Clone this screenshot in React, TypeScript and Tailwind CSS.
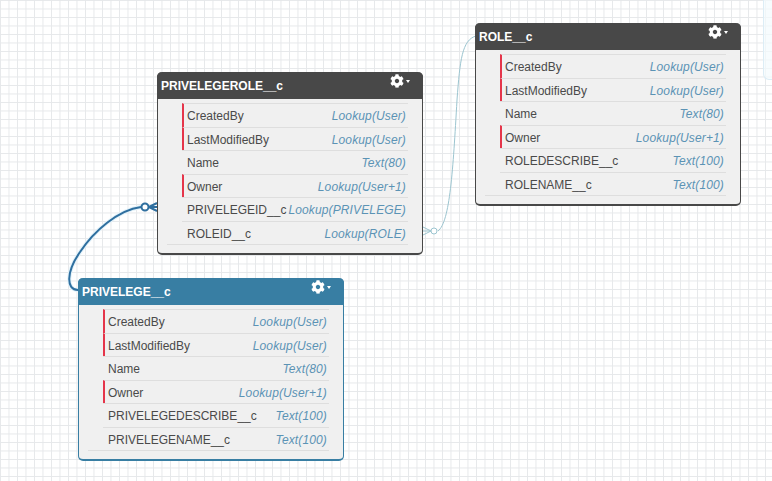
import { FaCog } from 'react-icons/fa'

interface Field {
  name: string
  type: string
  red?: boolean
}

interface EntityProps {
  title: string
  fields: Field[]
  headerClass: string
  borderClass: string
  posClass: string
}

const audit: Field[] = [
  { name: 'CreatedBy', type: 'Lookup(User)', red: true },
  { name: 'LastModifiedBy', type: 'Lookup(User)', red: true },
  { name: 'Name', type: 'Text(80)' },
  { name: 'Owner', type: 'Lookup(User+1)', red: true },
]

function Entity({ title, fields, headerClass, borderClass, posClass }: EntityProps) {
  return (
    <div className={`absolute w-[266px] rounded-[5px] border-x border-b-2 bg-[#f0f0f0] ${borderClass} ${posClass}`}>
      <div className={`relative -mx-px flex h-[27px] items-center rounded-t-[5px] pl-[4px] text-[12px] leading-none font-bold text-white ${headerClass}`}>
        {title}
        <div className="absolute top-[2px] right-[13px] flex items-center gap-[2px]">
          <FaCog size={14} />
          <span className="h-0 w-0 border-x-[2.5px] border-t-[3px] border-x-transparent border-t-white" />
        </div>
      </div>
      <div className="pt-[4px] pr-[14px] pb-[8px] pl-[24px]">
        {fields.map(f => (
          <div
            key={f.name}
            className={`flex h-[23.5px] items-center justify-between border-t border-[#dedede] pt-[2px] pr-[2px] text-[12px] ${f.red ? 'border-l-2 border-l-[#e5354a] pl-[3px]' : 'pl-[5px]'}`}
          >
            <span className="text-[#4a4a4a]">{f.name}</span>
            <span className="tracking-[0.13px] text-[#5b93b5] italic">{f.type}</span>
          </div>
        ))}
        <div className="ml-[-15px] border-t border-[#dedede]" />
      </div>
    </div>
  )
}

export default function App() {
  return (
    <div className="relative h-[481px] w-[772px] overflow-hidden bg-white bg-[linear-gradient(#e6e8ea_1px,transparent_1px),linear-gradient(90deg,#e6e8ea_1px,transparent_1px)] bg-[size:8.5px_8.5px] font-['Liberation_Sans',Arial,sans-serif]">
      {/* side panel edge, top right */}
      <div className="absolute top-0 right-0 h-[80px] w-[9px] rounded-bl-[6px] border-b border-l border-[#dcedf6] bg-[#f4fbfe]/70" />

      {/* relationship lines */}
      <svg className="absolute inset-0" width="772" height="481" fill="none">
        <path d="M78 290 C66 290 66 272 80 252 C94 231 118 210 141 207" stroke="#e2f2fa" strokeWidth="4" />
        <path d="M78 290 C66 290 66 272 80 252 C94 231 118 210 141 207" stroke="#2f6f9f" strokeWidth="2" />
        <circle cx="145" cy="207" r="3.5" stroke="#2f6f9f" strokeWidth="2" fill="white" />
        <path d="M149 207 L157 203 M149 207 L157 207 M149 207 L157 211" stroke="#2f6f9f" strokeWidth="2" />
        <path d="M476 36 C462 40 460 60 457 100 C453 170 450 222 438 231" stroke="#9cc5d0" strokeWidth="1" />
        <circle cx="434" cy="231" r="3" stroke="#9cc5d0" fill="white" />
        <path d="M431 231 L423 227 M431 231 L423 231 M431 231 L423 235" stroke="#9cc5d0" />
      </svg>

      <Entity
        title="PRIVELEGEROLE__c"
        headerClass="bg-[#484848]"
        borderClass="border-[#484848]"
        posClass="top-[72px] left-[157px]"
        fields={[...audit, { name: 'PRIVELEGEID__c', type: 'Lookup(PRIVELEGE)' }, { name: 'ROLEID__c', type: 'Lookup(ROLE)' }]}
      />
      <Entity
        title="ROLE__c"
        headerClass="bg-[#484848]"
        borderClass="border-[#484848]"
        posClass="top-[23px] left-[475px]"
        fields={[...audit, { name: 'ROLEDESCRIBE__c', type: 'Text(100)' }, { name: 'ROLENAME__c', type: 'Text(100)' }]}
      />
      <Entity
        title="PRIVELEGE__c"
        headerClass="bg-[#387ea3]"
        borderClass="border-[#387ea3]"
        posClass="top-[278px] left-[78px]"
        fields={[...audit, { name: 'PRIVELEGEDESCRIBE__c', type: 'Text(100)' }, { name: 'PRIVELEGENAME__c', type: 'Text(100)' }]}
      />
    </div>
  )
}
